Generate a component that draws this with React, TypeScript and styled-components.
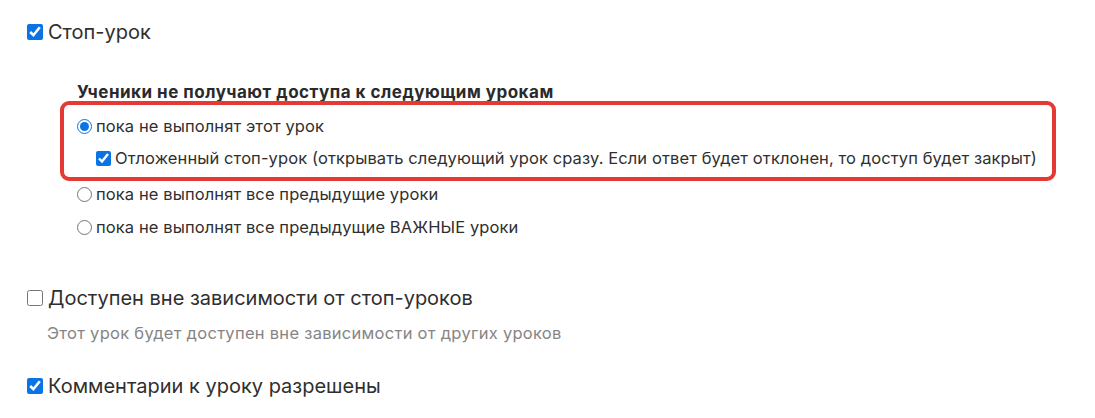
import React from "react";
import styled, { createGlobalStyle } from "styled-components";

const Global = createGlobalStyle`
  html, body { margin: 0; padding: 0; background: #fff; }
  body { font-family: Inter, "Noto Sans", sans-serif; color: #2f2f2f; }
  * { box-sizing: border-box; }
`;

const Page = styled.div`
  display: flex;
  flex-direction: column;
  padding: 17px 0 0 27px;
  width: 1095px;
  height: 418px;
  overflow: hidden;
`;

const MainRow = styled.label<{ $mt?: number }>`
  display: flex;
  align-items: center;
  gap: 5px;
  height: 30px;
  font-size: 20px;
  line-height: 30px;
  color: #2f2f2f;
  margin-top: ${(p) => p.$mt ?? 0}px;
`;

const BigBox = styled.input`
  width: 16px;
  height: 16px;
  margin: 0;
  accent-color: #0b74e5;
  flex: none;
`;

const Sub = styled.div`
  display: flex;
  flex-direction: column;
  margin: 36px 0 0 33px;
  width: 996px;
`;

const Heading = styled.div`
  font-weight: 700;
  font-size: 17px;
  letter-spacing: 0.5px;
  line-height: 18px;
  padding-left: 17px;
  color: #2a2a2a;
  white-space: nowrap;
`;

const Highlight = styled.div`
  display: flex;
  flex-direction: column;
  gap: 6px;
  border: 4px solid #e53a33;
  border-radius: 9px;
  padding: 8px 0 6px 13px;
`;

const Options = styled.div`
  display: flex;
  flex-direction: column;
  gap: 7px;
  padding-left: 17px;
`;

const OptRow = styled.label<{ $indent?: number }>`
  display: flex;
  align-items: center;
  gap: 4px;
  height: 26px;
  font-size: 16.5px;
  letter-spacing: 0.1px;
  line-height: 26px;
  padding-left: ${(p) => p.$indent ?? 0}px;
  white-space: nowrap;
`;

const Radio = styled.input`
  width: 15px;
  height: 15px;
  margin: 0;
  accent-color: #0b74e5;
  flex: none;
`;

const SmallBox = styled.input`
  width: 15px;
  height: 15px;
  margin: 0;
  accent-color: #0b74e5;
  flex: none;
`;

const Hint = styled.div`
  font-size: 16.5px;
  letter-spacing: 0.28px;
  line-height: 20px;
  color: #858585;
  margin: 10px 0 0 20px;
`;

export default function App() {
  return (
    <>
      <Global />
      <Page>
        <MainRow>
          <BigBox type="checkbox" defaultChecked />
          Стоп-урок
        </MainRow>
        <Sub>
          <Heading>Ученики не получают доступа к следующим урокам</Heading>
          <Highlight>
            <OptRow>
              <Radio type="radio" name="stop" defaultChecked />
              пока не выполнят этот урок
            </OptRow>
            <OptRow $indent={19}>
              <SmallBox type="checkbox" defaultChecked />
              Отложенный стоп-урок (открывать следующий урок сразу. Если ответ будет отклонен, то доступ будет закрыт)
            </OptRow>
          </Highlight>
          <Options>
            <OptRow>
              <Radio type="radio" name="stop" />
              пока не выполнят все предыдущие уроки
            </OptRow>
            <OptRow>
              <Radio type="radio" name="stop" />
              пока не выполнят все предыдущие ВАЖНЫЕ уроки
            </OptRow>
          </Options>
        </Sub>
        <MainRow $mt={43}>
          <BigBox type="checkbox" />
          Доступен вне зависимости от стоп-уроков
        </MainRow>
        <Hint>Этот урок будет доступен вне зависимости от других уроков</Hint>
        <MainRow $mt={28}>
          <BigBox type="checkbox" defaultChecked />
          Комментарии к уроку разрешены
        </MainRow>
      </Page>
    </>
  );
}
